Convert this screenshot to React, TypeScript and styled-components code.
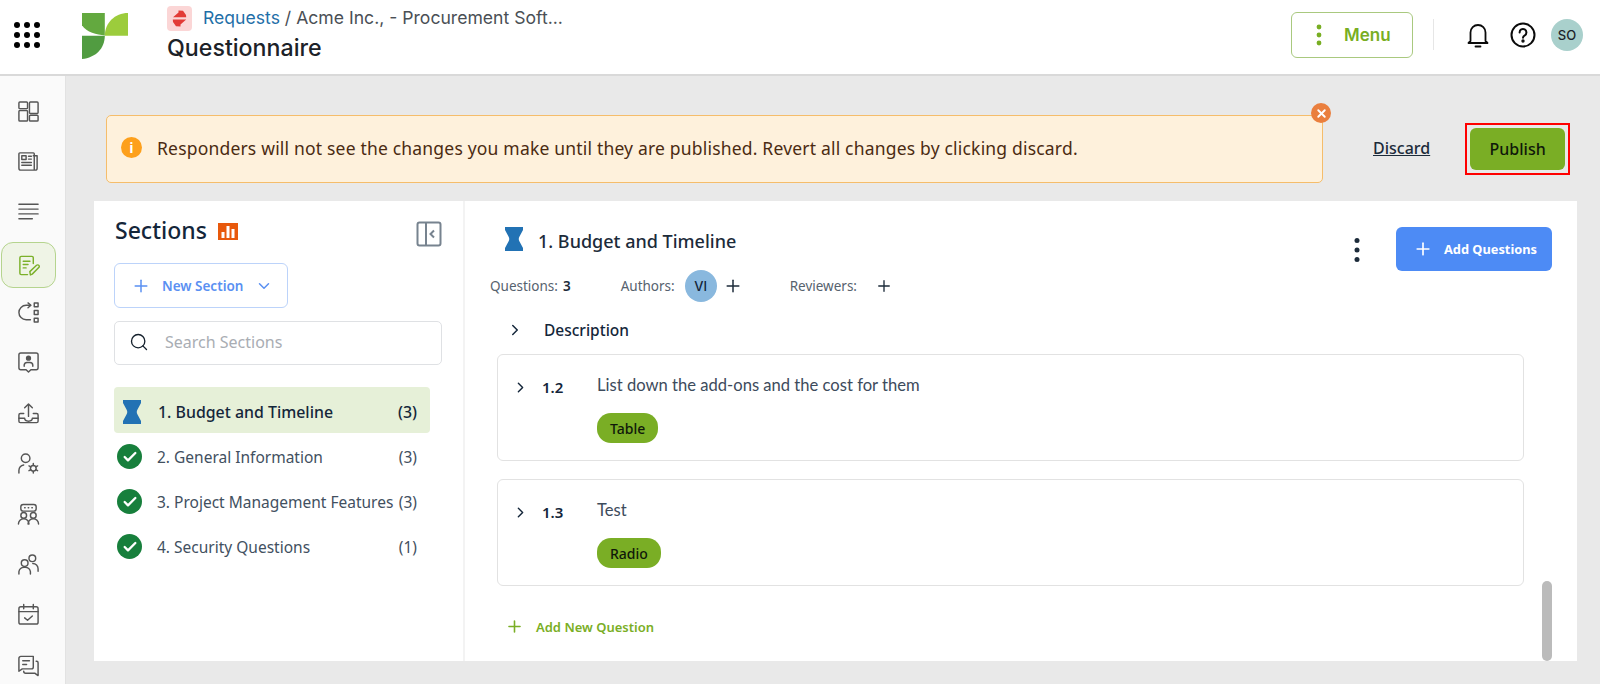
import * as React from "react";
import styled, { createGlobalStyle } from "styled-components";
import { Plus, ChevronDown, ChevronRight, Search, Check, X } from "lucide-react";

const BODY_FONT = `"Noto Sans", "Open Sans", Arial, sans-serif`;
const UI_FONT = `Inter, Arial, sans-serif`;

const GlobalStyle = createGlobalStyle`
  html, body { margin: 0; padding: 0; background: #e9e9e9; }
  * { box-sizing: border-box; }
  body { font-family: ${BODY_FONT}; color: #1c2b3a; }
`;

/* ---------- shell ---------- */

const Page = styled.div`
  width: 1600px;
  height: 684px;
  display: flex;
  flex-direction: column;
  overflow: hidden;
`;

const Header = styled.header`
  height: 76px;
  flex: none;
  display: flex;
  align-items: stretch;
  background: #fff;
  border-bottom: 2px solid #d9d9d9;
  padding-right: 17px;
`;

const Launcher = styled.div`
  width: 82px;
  flex: none;
  padding: 22px 0 0 14px;
`;

const LogoSlot = styled.div`
  width: 85px;
  flex: none;
  padding-top: 13px;
`;

const Titles = styled.div`
  flex: 1;
  display: flex;
  flex-direction: column;
  padding-top: 5px;
`;

const Crumbs = styled.div`
  display: flex;
  align-items: center;
  gap: 11px;
  height: 26px;
  font: 400 17.6px/26px ${UI_FONT};
  color: #4a4f55;
`;

const CrumbLink = styled.span`
  color: #1f6fa8;
`;

const PageTitle = styled.div`
  margin-top: 2px;
  font: 500 23.2px/30px ${UI_FONT};
  color: #1c2228;
`;

const HeaderActions = styled.div`
  display: flex;
  align-items: flex-start;
`;

const MenuButton = styled.div`
  width: 122px;
  height: 46px;
  margin-top: 12px;
  display: flex;
  align-items: center;
  padding-left: 24px;
  gap: 22px;
  border: 1.5px solid #a9c97f;
  border-radius: 6px;
  font: 600 17px ${UI_FONT};
  color: #78ae23;
`;

const HeaderRule = styled.div`
  width: 1px;
  height: 31px;
  margin: 19px 31px 0 20px;
  background: #e6e6e6;
`;

const HeaderIcon = styled.div<{ $gap: number }>`
  width: 26px;
  margin: 22px ${(p) => p.$gap}px 0 0;
  color: #0b0b0b;
`;

const UserBadge = styled.div`
  width: 32px;
  height: 32px;
  margin-top: 19px;
  border-radius: 50%;
  background: #a9d0cc;
  display: flex;
  align-items: center;
  justify-content: center;
  font: 500 13px ${UI_FONT};
  color: #1c2228;
`;

const Body = styled.div`
  flex: 1;
  min-height: 0;
  display: flex;
`;

const Rail = styled.nav`
  width: 66px;
  flex: none;
  background: #fafafa;
  border-right: 1px solid #e2e2e2;
  padding: 12px 0 0 1px;
  display: flex;
  flex-direction: column;
  gap: 4.4px;
`;

const RailItem = styled.div<{ $active?: boolean }>`
  width: 55px;
  height: 46px;
  flex: none;
  display: flex;
  align-items: center;
  justify-content: center;
  padding-top: ${(p) => (p.$active ? "1px" : "0")};
  margin: ${(p) => (p.$active ? "3px 0 -3px" : "0")};
  color: ${(p) => (p.$active ? "#7bb02a" : "#555")};
  background: ${(p) => (p.$active ? "#eff4e6" : "transparent")};
  border: 1px solid ${(p) => (p.$active ? "#b5d48e" : "transparent")};
  border-radius: 12px;
`;

const Main = styled.main`
  flex: 1;
  min-width: 0;
  display: flex;
  flex-direction: column;
  padding: 39px 23px 23px 28px;
`;

/* ---------- notice row ---------- */

const NoticeRow = styled.div`
  height: 67px;
  margin-bottom: 19px;
  padding-left: 12px;
  flex: none;
  display: flex;
  align-items: flex-start;
`;

const Notice = styled.div`
  position: relative;
  width: 1217px;
  height: 68px;
  display: flex;
  align-items: center;
  gap: 15px;
  padding: 0 0 3px 14px;
  background: #fef1dc;
  border: 1px solid #f5bd6b;
  border-radius: 5px;
  font-size: 17.5px;
  letter-spacing: 0.19px;
  color: #4b2b12;
`;

const InfoDot = styled.div`
  width: 21px;
  height: 21px;
  flex: none;
  border-radius: 50%;
  background: #fda01c;
  color: #fff;
  display: flex;
  align-items: center;
  justify-content: center;
  font: 700 14px ${UI_FONT};
`;

const CloseDot = styled.div`
  position: absolute;
  top: -13px;
  right: -9px;
  width: 20px;
  height: 20px;
  border-radius: 50%;
  background: #ea7f3e;
  color: #fff;
  display: flex;
  align-items: center;
  justify-content: center;
`;

const Discard = styled.a`
  margin: 22px 0 0 50px;
  font-size: 16px;
  font-weight: 500;
  line-height: 22px;
  color: #1c2b3a;
  text-decoration: underline;
`;

const PublishFrame = styled.div`
  margin: 8px 0 0 35px;
  padding: 3px;
  border: 2px solid #f00;
`;

const PublishButton = styled.div`
  width: 95px;
  height: 42px;
  display: flex;
  align-items: center;
  justify-content: center;
  background: #7aae25;
  border-radius: 6px;
  font-size: 16px;
  font-weight: 500;
  color: #10180a;
`;

/* ---------- panel ---------- */

const Panel = styled.section`
  flex: 1;
  min-height: 0;
  display: flex;
  background: #fff;
`;

const SectionsColumn = styled.aside`
  width: 371px;
  flex: none;
  border-right: 2px solid #f3f3f3;
  padding: 0 21px 0 20px;
  display: flex;
  flex-direction: column;
`;

const SectionsHead = styled.div`
  height: 62px;
  display: flex;
  align-items: flex-start;
  padding: 13px 0 0 1px;
  gap: 11px;
`;

const SectionsTitle = styled.div`
  font-size: 23px;
  font-weight: 500;
  line-height: 32px;
  color: #14263a;
`;

const ChartBadge = styled.div`
  margin-top: 9px;
  line-height: 0;
`;

const CollapseButton = styled.div`
  margin: 7px 0 0 auto;
  line-height: 0;
`;

const NewSection = styled.div`
  width: 174px;
  height: 45px;
  display: flex;
  align-items: center;
  padding-left: 16px;
  border: 1px solid #bcd3fa;
  border-radius: 6px;
  font-size: 13.5px;
  font-weight: 600;
  color: #5a90f2;
`;

const NewSectionLabel = styled.span`
  margin: 0 12px 0 11px;
`;

const SearchBox = styled.div`
  height: 44px;
  margin-top: 13px;
  display: flex;
  align-items: center;
  gap: 16px;
  padding: 0 0 2px 14px;
  border: 1px solid #dfe1e4;
  border-radius: 5px;
  font-size: 16px;
  color: #a9adb3;
`;

const SectionList = styled.div`
  margin-top: 22px;
  width: 316px;
  display: flex;
  flex-direction: column;
`;

const SectionRow = styled.div<{ $active?: boolean }>`
  height: ${(p) => (p.$active ? "46px" : "45px")};
  margin-bottom: ${(p) => (p.$active ? "1px" : "0")};
  display: flex;
  align-items: center;
  padding: ${(p) => (p.$active ? "3px 13px 0 9px" : "0 13px 0 3px")};
  background: ${(p) => (p.$active ? "#e6f0d8" : "transparent")};
  border-radius: 4px;
  font-size: ${(p) => (p.$active ? "15.9px" : "15.5px")};
  font-weight: ${(p) => (p.$active ? 500 : 400)};
  color: ${(p) => (p.$active ? "#14263a" : "#42505f")};
`;

const RowName = styled.span<{ $active?: boolean }>`
  margin-left: ${(p) => (p.$active ? "17px" : "15px")};
  flex: 1;
  white-space: nowrap;
`;

const RowCount = styled.span`
  width: 20px;
  text-align: right;
  white-space: nowrap;
`;

const CheckDot = styled.div`
  width: 25px;
  height: 25px;
  flex: none;
  border-radius: 50%;
  background: #177f3c;
  color: #fff;
  display: flex;
  align-items: center;
  justify-content: center;
`;

const Detail = styled.div`
  position: relative;
  flex: 1;
  min-width: 0;
  padding: 0 0 0 25px;
  display: flex;
  flex-direction: column;
`;

const DetailHeadWrap = styled.div`
  display: flex;
  align-items: flex-start;
  height: 71px;
`;

const DetailHead = styled.div`
  display: flex;
  align-items: flex-start;
  padding: 26px 0 0 15px;
`;

const DetailTitle = styled.div`
  margin-left: 15px;
  font-size: 18px;
  font-weight: 500;
  line-height: 28px;
  color: #1c2b3a;
`;

const Kebab = styled.div`
  margin: 36px 0 0 auto;
  line-height: 0;
`;

const AddQuestions = styled.div`
  width: 156px;
  height: 44px;
  margin: 26px 25px 0 36px;
  display: flex;
  align-items: center;
  gap: 11px;
  padding-left: 17px;
  background: #4d8bf5;
  border-radius: 6px;
  font-size: 12.8px;
  font-weight: 700;
  color: #fff;
`;

const MetaRow = styled.div`
  height: 32px;
  margin-top: -2px;
  display: flex;
  align-items: center;
  font-size: 13.5px;
  color: #56626e;
`;

const MetaCount = styled.b`
  margin-left: 5px;
  font-weight: 600;
  color: #1c2b3a;
`;

const MetaLabel = styled.span<{ $gap: number }>`
  margin-left: ${(p) => p.$gap}px;
  line-height: 0;
`;

const Avatar = styled.div`
  width: 32px;
  height: 32px;
  margin: 0 6px 0 10px;
  border-radius: 50%;
  background: #89b8de;
  display: flex;
  align-items: center;
  justify-content: center;
  font: 500 13px ${UI_FONT};
  color: #14263a;
`;

const DescriptionRow = styled.div`
  height: 46px;
  margin: 5px 0 1px;
  display: flex;
  align-items: center;
  padding-left: 16px;
  gap: 20px;
  font-size: 15.5px;
  font-weight: 500;
  color: #14263a;
`;

const QuestionCard = styled.div`
  width: 1027px;
  height: 107px;
  margin: 0 0 18px 7px;
  padding: 18px 0 0 14px;
  display: grid;
  grid-template-columns: 30px 55px 1fr;
  grid-template-rows: 27px 1fr;
  row-gap: 13px;
  border: 1px solid #e2e2e2;
  border-radius: 6px;
`;

const QuestionChevron = styled.div`
  padding-top: 6px;
  line-height: 0;
  color: #14263a;
`;

const QuestionNumber = styled.div`
  padding-top: 1px;
  font-size: 15px;
  font-weight: 600;
  line-height: 27px;
  color: #14263a;
`;

const QuestionText = styled.div`
  font: 400 16.6px/24px Lato, Arial, sans-serif;
  color: #3d4b5c;
`;

const TypePill = styled.div`
  grid-column: 3;
  justify-self: start;
  height: 30px;
  padding: 0 13px;
  display: flex;
  align-items: center;
  background: #7aae25;
  border-radius: 14px;
  font-size: 14px;
  font-weight: 500;
  color: #10180a;
`;

const AddNewQuestion = styled.div`
  margin: 13px 0 0 15px;
  display: flex;
  align-items: center;
  gap: 12px;
  font-size: 13px;
  font-weight: 600;
  color: #7aae25;
`;

const ScrollThumb = styled.div`
  position: absolute;
  top: 380px;
  right: 25px;
  width: 10px;
  height: 80px;
  border-radius: 5px;
  background: #bbbbbb;
`;

/* ---------- drawings ---------- */

const DotsGrid = () => (
  <svg width="26" height="26" viewBox="0 0 26 26" fill="#000">
    {[3, 13, 23].map((y) =>
      [3, 13, 23].map((x) => <circle key={`${x}-${y}`} cx={x} cy={y} r="3" />)
    )}
  </svg>
);

const Logo = () => (
  <svg width="46" height="46" viewBox="0 0 119 119">
    <path d="M0 0H59V58C38 57 12 50 0 32Z" fill="#63a93f" />
    <path d="M119 0V59H59C59 26 85 0 119 0Z" fill="#9ccc3c" />
    <path d="M0 59H59C59 92 35 116 0 119Z" fill="#519c41" />
  </svg>
);

const ExchangeIcon = () => (
  <svg width="25" height="25" viewBox="0 0 25 25">
    <rect width="25" height="25" rx="4" fill="#fbd6d6" />
    <path d="M6 11.3 11.5 6.500V4.500L16 4.700 19 9 19.200 11.300Z" fill="#e23b36" />
    <path d="M19.200 13.500 13.500 18.500V20.500L9 20.300 6 16 5.800 13.500Z" fill="#e23b36" />
  </svg>
);

const BellIcon = () => (
  <svg width="26" height="26" viewBox="0 0 26 26" fill="none" stroke="currentColor" strokeWidth="1.8" strokeLinecap="round">
    <path d="M5.500 19V10.500a7.500 7.500 0 0 1 15 0V19l2 2H3.500Z" strokeLinejoin="round" />
    <path d="M10.500 24.500h5" />
  </svg>
);

const HelpIcon = () => (
  <svg width="26" height="26" viewBox="0 0 26 26" fill="none" stroke="currentColor" strokeWidth="2">
    <circle cx="13" cy="13" r="11.500" />
    <path d="M9.600 10.400a3.400 3.400 0 1 1 5.200 2.900c-1.200.7-1.800 1.300-1.800 2.500" strokeLinecap="round" />
    <circle cx="13" cy="19" r=".7" fill="currentColor" />
  </svg>
);

const MenuDots = () => (
  <svg width="6" height="22" viewBox="0 0 6 22" fill="#78ae23">
    <circle cx="3" cy="3" r="2.400" />
    <circle cx="3" cy="11" r="2.400" />
    <circle cx="3" cy="19" r="2.400" />
  </svg>
);

const SectionDots = () => (
  <svg width="6" height="26" viewBox="0 0 6 26" fill="#1c2b3a">
    <circle cx="3" cy="3.500" r="2.500" />
    <circle cx="3" cy="13" r="2.500" />
    <circle cx="3" cy="22.500" r="2.500" />
  </svg>
);

const Hourglass = () => (
  <svg width="18" height="24" viewBox="0 0 18 24" fill="#2272b4">
    <path d="M0 0H18V3L14.500 9.500C13.500 11 13.500 13 14.500 14.500L18 21V24H0V21L3.500 14.500C4.500 13 4.500 11 3.500 9.500L0 3Z" />
  </svg>
);

const ChartIcon = () => (
  <svg width="20" height="17" viewBox="0 0 20 17">
    <rect width="20" height="17" fill="#e8590c" />
    <rect x="3.500" y="9" width="3" height="6" fill="#fff" />
    <rect x="8.500" y="3" width="3" height="12" fill="#fff" />
    <rect x="13.500" y="6" width="3" height="9" fill="#fff" />
  </svg>
);

const CollapseIcon = () => (
  <svg width="26" height="26" viewBox="0 0 26 26" fill="none" stroke="#77838f" strokeWidth="2">
    <rect x="1.500" y="1.500" width="23" height="23" rx="2" />
    <path d="M10 2V24" />
    <path d="M18 9.500 14.500 13 18 16.500" />
  </svg>
);

const railIcons: React.ReactNode[] = [
  <>
    <rect x="2" y="2" width="9" height="7" rx="1" />
    <rect x="2" y="11" width="9" height="11" rx="1" />
    <rect x="13" y="2" width="9" height="12" rx="1" />
    <rect x="13" y="16" width="9" height="6" rx="1" />
  </>,
  <>
    <path d="M18 21H4a2 2 0 0 1-2-2V4a1 1 0 0 1 1-1h14a1 1 0 0 1 1 1v17h1a2 2 0 0 0 2-2V6h-4" />
    <rect x="5" y="6" width="4.500" height="4" />
    <path d="M12 6.500h3M12 9.500h3M5 13h10M5 16h10" />
  </>,
  <path d="M2 4.500h20M2 9.500h20M2 14.500h20M2 19.500h14" />,
  <>
    <path d="M17 10V4a1.500 1.500 0 0 0-1.500-1.500h-11A1.500 1.500 0 0 0 3 4v16a1.500 1.500 0 0 0 1.500 1.500H11" />
    <path d="M6.500 7.500h7M6.500 11h5M6.500 14.500h3" />
    <path d="M14 21.800l-.6-3.400 7-6.600c.8-.7 1.800-.6 2.400.1.6.7.5 1.600-.1 2.300l-6.800 6.800Z" />
  </>,
  <>
    <path d="M14 4.500H9.500a7.500 7.500 0 0 0 0 15H14" />
    <path d="M11.500 2 14.500 4.500 11.500 7" />
    <rect x="18" y="2" width="4" height="4" />
    <rect x="18" y="10" width="4" height="4" />
    <rect x="18" y="18" width="4" height="4" />
  </>,
  <>
    <path d="M14.500 19.500H20a2 2 0 0 0 2-2V4a2 2 0 0 0-2-2H4a2 2 0 0 0-2 2v13.500a2 2 0 0 0 2 2h5.500L12 22Z" />
    <circle cx="12" cy="7.500" r="2" fill="currentColor" />
    <path d="M7.500 16v-1.500A3 3 0 0 1 10.500 12h3a3 3 0 0 1 3 3V16" />
  </>,
  <>
    <path d="M12 15V2.500M8 6l4-4 4 4" />
    <path d="M7 12H3.500A1.500 1.500 0 0 0 2 13.500V20a1.500 1.500 0 0 0 1.500 1.500h17A1.500 1.500 0 0 0 22 20v-6.500a1.500 1.500 0 0 0-1.500-1.500H17" />
    <path d="M2 17h6c0 2 1.500 3 4 3s4-1 4-3h6" />
  </>,
  <>
    <circle cx="9" cy="6.500" r="4.500" />
    <path d="M2 22v-3a6 6 0 0 1 5-5.500" />
    <circle cx="17" cy="17" r="3" />
    <path d="M17 12v2M17 20v2M12.500 14.500l2 1M21.500 14.500l-2 1M12.500 19.500l2-1M21.500 19.500l-2-1" />
  </>,
  <>
    <rect x="4" y="1.500" width="16" height="7" rx="2.500" />
    <path d="M8 5h.5M11.700 5h.5M15.500 5h.5" />
    <circle cx="7" cy="13" r="3" />
    <circle cx="17" cy="13" r="3" />
    <path d="M1.500 22a5.500 5.500 0 0 1 11 0M11.500 22a5.500 5.500 0 0 1 11 0" />
  </>,
  <>
    <circle cx="8" cy="10.500" r="3.500" />
    <circle cx="16" cy="5.500" r="3.500" />
    <path d="M2 22v-2.500A5.500 5.500 0 0 1 7.500 15h1a5.500 5.500 0 0 1 5.500 4.500V22" />
    <path d="M16.500 11a5.500 5.500 0 0 1 5.500 5.500V19" />
  </>,
  <>
    <rect x="2" y="4" width="20" height="18" rx="2" />
    <path d="M2 9h20M7 1.500V6M17 1.500V6" />
    <path d="M8 15.500l3 2.500 5-4.500" />
  </>,
  <>
    <path d="M17 2.500H4a2 2 0 0 0-2 2V18l3.500-2.500H15a2 2 0 0 0 2-2Z" />
    <path d="M6 7h7M6 11h4" />
    <path d="M20 7.500h.5A1.500 1.500 0 0 1 22 9v13.500L18.500 20H9a2 2 0 0 1-2-2" />
  </>,
];

const sections = [
  { name: "2. General Information", count: 3 },
  { name: "3. Project Management Features", count: 3 },
  { name: "4. Security Questions", count: 1 },
];

const questions = [
  { id: "1.2", text: "List down the add-ons and the cost for them", type: "Table" },
  { id: "1.3", text: "Test", type: "Radio" },
];

const App = () => (
  <Page>
    <GlobalStyle />
    <Header>
      <Launcher>
        <DotsGrid />
      </Launcher>
      <LogoSlot>
        <Logo />
      </LogoSlot>
      <Titles>
        <Crumbs>
          <ExchangeIcon />
          <span>
            <CrumbLink>Requests</CrumbLink> / Acme Inc., - Procurement Soft...
          </span>
        </Crumbs>
        <PageTitle>Questionnaire</PageTitle>
      </Titles>
      <HeaderActions>
        <MenuButton>
          <MenuDots />
          Menu
        </MenuButton>
        <HeaderRule />
        <HeaderIcon $gap={19}>
          <BellIcon />
        </HeaderIcon>
        <HeaderIcon $gap={15}>
          <HelpIcon />
        </HeaderIcon>
        <UserBadge>SO</UserBadge>
      </HeaderActions>
    </Header>
    <Body>
      <Rail>
        {railIcons.map((icon, i) => (
          <RailItem key={i} $active={i === 3}>
            <svg
              width="23"
              height="23"
              viewBox="0 0 24 24"
              fill="none"
              stroke="currentColor"
              strokeWidth="1.5"
              strokeLinecap="round"
              strokeLinejoin="round"
            >
              {icon}
            </svg>
          </RailItem>
        ))}
      </Rail>
      <Main>
        <NoticeRow>
          <Notice>
            <InfoDot>i</InfoDot>
            Responders will not see the changes you make until they are published. Revert all changes by clicking discard.
            <CloseDot>
              <X size={13} strokeWidth={3.5} />
            </CloseDot>
          </Notice>
          <Discard>Discard</Discard>
          <PublishFrame>
            <PublishButton>Publish</PublishButton>
          </PublishFrame>
        </NoticeRow>
        <Panel>
          <SectionsColumn>
            <SectionsHead>
              <SectionsTitle>Sections</SectionsTitle>
              <ChartBadge>
                <ChartIcon />
              </ChartBadge>
              <CollapseButton>
                <CollapseIcon />
              </CollapseButton>
            </SectionsHead>
            <NewSection>
              <Plus size={20} strokeWidth={1.8} />
              <NewSectionLabel>New Section</NewSectionLabel>
              <ChevronDown size={18} strokeWidth={2} />
            </NewSection>
            <SearchBox>
              <Search size={20} color="#14202c" strokeWidth={1.6} />
              Search Sections
            </SearchBox>
            <SectionList>
              <SectionRow $active>
                <Hourglass />
                <RowName $active>1. Budget and Timeline</RowName>
                <RowCount>(3)</RowCount>
              </SectionRow>
              {sections.map((s) => (
                <SectionRow key={s.name}>
                  <CheckDot>
                    <Check size={16} strokeWidth={3.5} />
                  </CheckDot>
                  <RowName>{s.name}</RowName>
                  <RowCount>({s.count})</RowCount>
                </SectionRow>
              ))}
            </SectionList>
          </SectionsColumn>
          <Detail>
            <DetailHeadWrap>
              <DetailHead>
                <Hourglass />
                <DetailTitle>1. Budget and Timeline</DetailTitle>
              </DetailHead>
              <Kebab>
                <SectionDots />
              </Kebab>
              <AddQuestions>
                <Plus size={20} strokeWidth={2} />
                Add Questions
              </AddQuestions>
            </DetailHeadWrap>
            <MetaRow>
              Questions:<MetaCount>3</MetaCount>
              <MetaLabel $gap={50}>Authors:</MetaLabel>
              <Avatar>VI</Avatar>
              <Plus size={20} strokeWidth={1.8} color="#1c2b3a" />
              <MetaLabel $gap={47}>Reviewers:</MetaLabel>
              <MetaLabel $gap={18}>
                <Plus size={18} strokeWidth={1.8} color="#1c2b3a" />
              </MetaLabel>
            </MetaRow>
            <DescriptionRow>
              <ChevronRight size={18} strokeWidth={2} />
              Description
            </DescriptionRow>
            {questions.map((q) => (
              <QuestionCard key={q.id}>
                <QuestionChevron>
                  <ChevronRight size={17} strokeWidth={2} />
                </QuestionChevron>
                <QuestionNumber>{q.id}</QuestionNumber>
                <QuestionText>{q.text}</QuestionText>
                <TypePill>{q.type}</TypePill>
              </QuestionCard>
            ))}
            <AddNewQuestion>
              <Plus size={19} strokeWidth={2} />
              Add New Question
            </AddNewQuestion>
            <ScrollThumb />
          </Detail>
        </Panel>
      </Main>
    </Body>
  </Page>
);

export default App;
